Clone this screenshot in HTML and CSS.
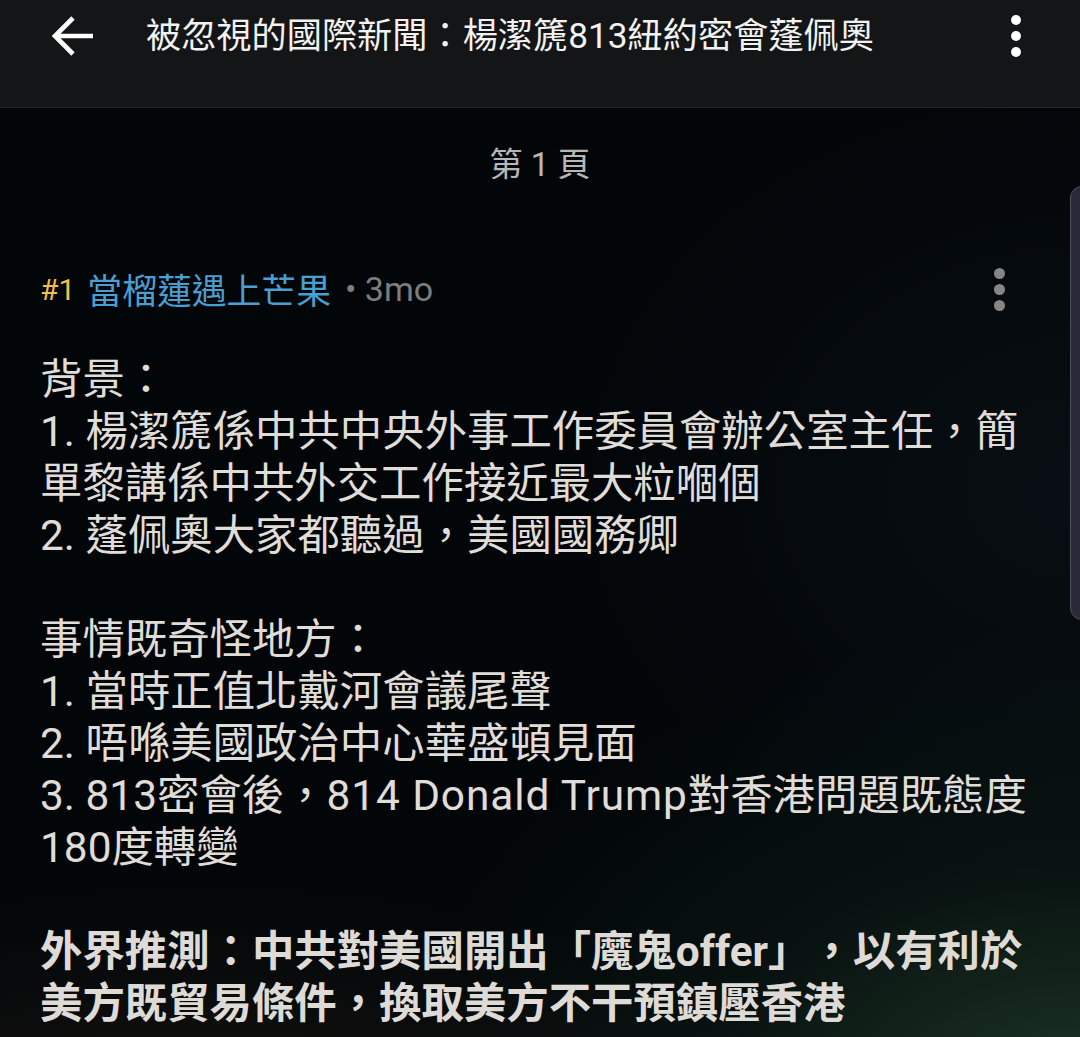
FILE: index.html
```html
<!DOCTYPE html>
<html lang="zh-Hant">
<head>
<meta charset="utf-8">
<title>被忽視的國際新聞</title>
<link rel="stylesheet" href="styles.css">
</head>
<body>
<div class="screen">
  <header class="topbar">
    <div class="toolbar">
      <button class="icon-btn back" aria-label="返回">
        <svg width="46" height="44" viewBox="0 0 46 44"><path d="M42 22 H5 M22 4 L4 22 L22 40" fill="none" stroke="#ffffff" stroke-width="4.6" stroke-linecap="butt" stroke-linejoin="miter"/></svg>
      </button>
      <h1 class="title">被忽視的國際新聞：楊潔篪813紐約密會蓬佩奧</h1>
      <button class="icon-btn more" aria-label="更多">
        <span class="dot"></span><span class="dot"></span><span class="dot"></span>
      </button>
    </div>
  </header>
  <main class="content">
    <div class="page-label">第 1 頁</div>
    <article class="post">
      <div class="post-head">
        <span class="floor">#1</span>
        <span class="author">當榴蓮遇上芒果</span>
        <span class="meta">• 3mo</span>
        <span class="post-more"><span class="dot"></span><span class="dot"></span><span class="dot"></span></span>
      </div>
      <div class="post-body">
        <p>背景：</p>
        <p>1. 楊潔篪係中共中央外事工作委員會辦公室主任，簡<br>單黎講係中共外交工作接近最大粒嗰個</p>
        <p>2. 蓬佩奧大家都聽過，美國國務卿</p>
        <p class="blank">&nbsp;</p>
        <p>事情既奇怪地方：</p>
        <p>1. 當時正值北戴河會議尾聲</p>
        <p>2. 唔喺美國政治中心華盛頓見面</p>
        <p>3. 813密會後，<span class="latin">814 Donald Trump</span>對香港問題既態度<br>180度轉變</p>
        <p class="blank">&nbsp;</p>
        <p class="strong">外界推測：中共對美國開出「魔鬼offer」，以有利於<br>美方既貿易條件，換取美方不干預鎮壓香港</p>
      </div>
    </article>
    <div class="scroll-handle"></div>
  </main>
</div>
</body>
</html>
```

FILE: styles.css
```css
html, body {
  margin: 0;
  padding: 0;
  background: #020609;
}
.screen {
  width: 1080px;
  height: 1037px;
  overflow: hidden;
  display: flex;
  flex-direction: column;
  font-family: Roboto, "Noto Sans CJK TC", sans-serif;
  text-spacing-trim: space-all;
}
.topbar {
  height: 107px;
  flex: none;
  background: #131517;
  border-bottom: 1px solid #25282b;
}
.toolbar {
  height: 72px;
  display: flex;
  align-items: center;
}
.icon-btn {
  background: none;
  border: 0;
  padding: 0;
  cursor: pointer;
}
.back {
  width: 46px;
  height: 44px;
  margin-left: 51px;
  display: flex;
}
.title {
  margin: 0 0 0 49px;
  font-size: 35.2px;
  font-weight: 400;
  color: #f2f2f2;
  line-height: 44px;
  white-space: nowrap;
  flex: 1;
}
.more {
  width: 12px;
  display: flex;
  flex-direction: column;
  align-items: center;
  gap: 6px;
  margin-right: 58px;
}
.more .dot {
  width: 10px;
  height: 10px;
  border-radius: 50%;
  background: #ffffff;
}
.content {
  position: relative;
  flex: 1;
  padding: 32px 40px 0 40px;
  background:
    radial-gradient(ellipse 700px 520px at 1080px 1037px, rgba(40, 72, 50, 0.8), rgba(20, 40, 30, 0.35) 55%, rgba(2, 6, 9, 0) 100%),
    radial-gradient(ellipse 600px 260px at 200px 1037px, rgba(40, 30, 20, 0.55), rgba(2, 6, 9, 0) 100%),
    radial-gradient(ellipse 500px 400px at 1080px 380px, rgba(20, 30, 38, 0.35), rgba(2, 6, 9, 0) 100%),
    #020609;
}
.page-label {
  height: 50px;
  line-height: 50px;
  text-align: center;
  font-size: 33px;
  color: #b6b6b6;
}
.post {
  margin-top: 74px;
}
.post-head {
  height: 50px;
  display: flex;
  align-items: center;
  font-size: 33px;
}
.floor {
  color: #f0c04a;
  font-size: 30px;
}
.author {
  color: #4a9fd2;
  margin-left: 12px;
  font-size: 34.8px;
}
.meta {
  color: #7d7d7d;
  margin-left: 14px;
  font-size: 34px;
}
.post-more {
  margin-left: auto;
  margin-right: 35px;
  display: flex;
  flex-direction: column;
  gap: 5px;
}
.post-more .dot {
  width: 11px;
  height: 11px;
  border-radius: 50%;
  background: #858585;
}
.post-body {
  margin-top: 40px;
  font-size: 42.4px;
  line-height: 52px;
  color: #e0ddd8;
}
.post-body p {
  margin: 0;
  white-space: nowrap;
}
.post-body .latin {
  letter-spacing: 0.9px;
}
.post-body .strong {
  font-weight: 700;
  color: #dedad5;
}
.scroll-handle {
  position: absolute;
  top: 78px;
  right: -4px;
  width: 12px;
  height: 432px;
  background: #292a37;
  border: 1.5px solid #50535b;
  border-radius: 12px 0 0 12px;
}
```
